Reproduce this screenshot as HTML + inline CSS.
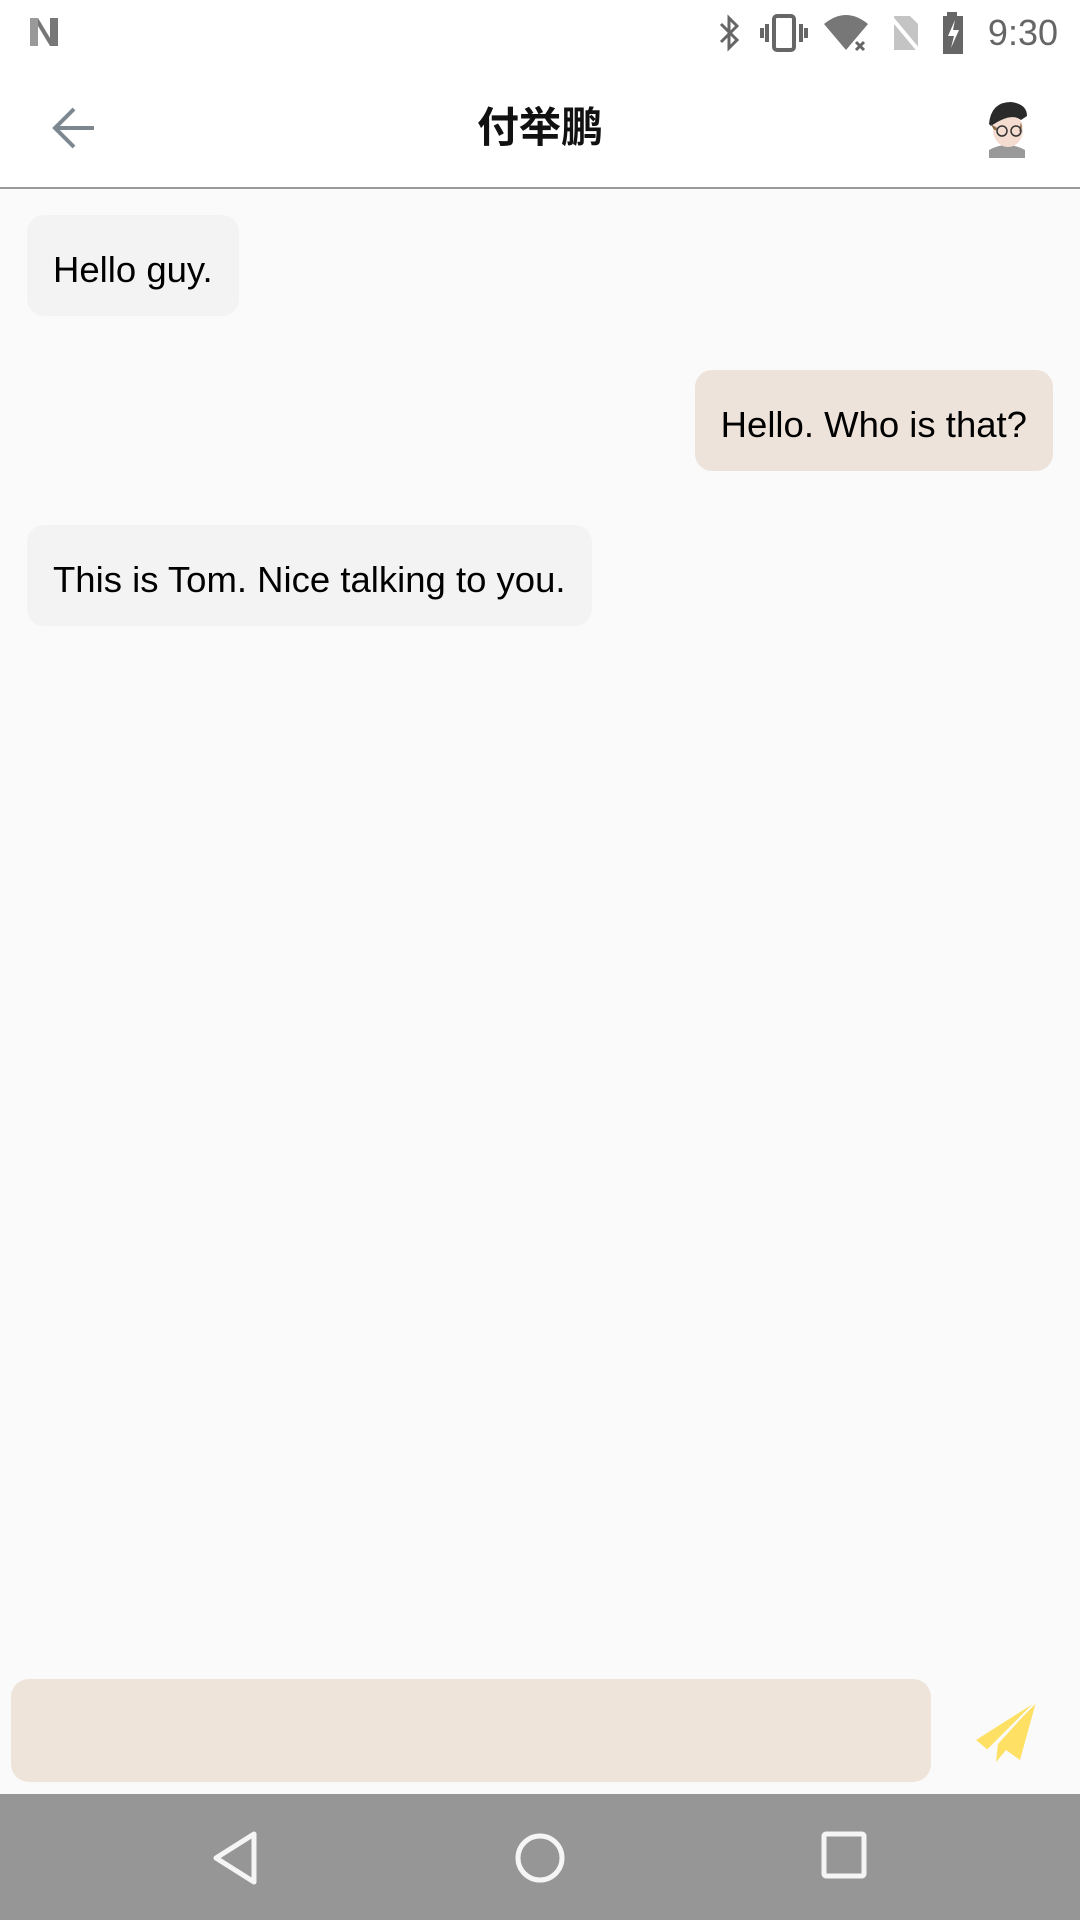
<!DOCTYPE html>
<html><head><meta charset="utf-8"><style>
*{margin:0;padding:0;box-sizing:border-box}
body{width:1080px;height:1920px;background:#fafafa;position:relative;overflow:hidden;font-family:"Liberation Sans","Noto Sans CJK SC",sans-serif}
.status{position:absolute;top:0;left:0;width:1080px;height:67px;background:#fff}
.header{position:absolute;top:67px;left:0;width:1080px;height:122px;background:#fff;border-bottom:2px solid #9a9a9a}
.title{position:absolute;top:0;left:0;width:1080px;text-align:center;line-height:122px;font-size:42px;font-weight:bold;color:#111}
.b{position:absolute;height:101px;border-radius:17px;font-size:36.5px;line-height:101px;padding:4px 26px 0;color:#000;white-space:nowrap}
.l{background:#f3f3f3;left:27px}
.r{background:#eee3da;right:27px}
.input{position:absolute;left:11px;top:1679px;width:920px;height:103px;background:#eee4da;border-radius:18px}
.nav{position:absolute;left:0;top:1794px;width:1080px;height:126px;background:#969696}
</style></head><body>
<div class="status">
<svg style="position:absolute;left:28px;top:16px" width="40" height="32" viewBox="0 0 40 32"><path d="M2 2h8l12 20V2h8v28h-8L10 10v20H2z" fill="#777"/><path d="M2 2h8v28H2z" fill="#999"/></svg>
<svg style="position:absolute;left:715px;top:12px" width="30" height="42" viewBox="0 0 30 42"><path d="M6 12l16 16-8 8V6l8 8-16 16" fill="none" stroke="#666" stroke-width="3"/></svg>
<svg style="position:absolute;left:760px;top:12px" width="50" height="42" viewBox="0 0 50 42"><rect x="14" y="4" width="20" height="34" rx="3" fill="none" stroke="#666" stroke-width="4"/><path d="M7 12v18M2 16v10M41 12v18M46 16v10" stroke="#666" stroke-width="4"/></svg>
<svg style="position:absolute;left:822px;top:12px" width="50" height="42" viewBox="0 0 50 42"><path d="M2 12Q24-6 46 12L24 38z" fill="#777"/><path d="M34 30l8 8M42 30l-8 8" stroke="#666" stroke-width="3"/></svg>
<svg style="position:absolute;left:886px;top:12px" width="36" height="42" viewBox="0 0 36 42"><path d="M8 4h16l8 8v26H8z" fill="#c4c4c4"/><path d="M4 4l30 36" stroke="#fff" stroke-width="4"/></svg>
<svg style="position:absolute;left:938px;top:10px" width="30" height="44" viewBox="0 0 30 44"><path d="M9 2h10v4h6v38H5V6h4z" fill="#666"/><path d="M17 10l-7 16h6l-3 12 8-18h-6z" fill="#fff"/></svg>
<div style="position:absolute;right:22px;top:12px;font-size:36px;color:#666;line-height:42px">9:30</div>
</div>
<div class="header">
<svg style="position:absolute;left:50px;top:38px" width="48" height="46" viewBox="0 0 48 46"><path d="M44 23H6M24 4L5 23l19 19" fill="none" stroke="#7d8790" stroke-width="4"/></svg>
<div class="title">付举鹏</div>
<svg style="position:absolute;left:975px;top:27px" width="64" height="64" viewBox="0 0 64 64"><rect width="64" height="64" fill="#fff"/><path d="M14 56q18-10 36 0v8H14z" fill="#999"/><ellipse cx="33" cy="36" rx="15" ry="17" fill="#f4ddd0"/><path d="M14 30q2-22 22-22q16 2 16 14l-6 4q-10-8-30 6z" fill="#2a2a2a"/><path d="M16 30q4 10 6 4M46 28q2 8-2 10" fill="#8a6a4a"/><circle cx="27" cy="37" r="5" fill="none" stroke="#333" stroke-width="1.5"/><circle cx="41" cy="37" r="5" fill="none" stroke="#333" stroke-width="1.5"/></svg>
</div>
<div class="b l" style="top:215px">Hello guy.</div>
<div class="b r" style="top:370px">Hello. Who is that?</div>
<div class="b l" style="top:525px">This is Tom. Nice talking to you.</div>
<div class="input"></div>
<svg style="position:absolute;left:972px;top:1698px" width="68" height="68" viewBox="0 0 68 68"><path d="M64 4L4 42l12 10L64 4 26 46l-2 18 10-12 14 10z" fill="#fde064"/><path d="M64 4L16 52" stroke="#fafafa" stroke-width="2"/></svg>
<div class="nav">
<svg style="position:absolute;left:210px;top:36px" width="50" height="56" viewBox="0 0 50 56"><path d="M44 4L6 28l38 24z" fill="none" stroke="#f5f5f5" stroke-width="5" stroke-linejoin="round"/></svg>
<svg style="position:absolute;left:512px;top:36px" width="56" height="56" viewBox="0 0 56 56"><circle cx="28" cy="28" r="22" fill="none" stroke="#f5f5f5" stroke-width="5"/></svg>
<svg style="position:absolute;left:818px;top:34px" width="54" height="56" viewBox="0 0 54 56"><rect x="6" y="6" width="40" height="42" rx="2" fill="none" stroke="#f5f5f5" stroke-width="5"/></svg>
</div>
</body></html>
